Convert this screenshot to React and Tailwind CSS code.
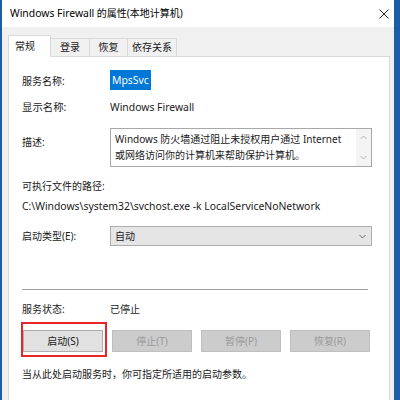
import React from "react";

const font = "font-['Noto_Sans','Noto_Sans_CJK_SC',sans-serif]";

const Row = ({ label, children, className = "" }) => (
  <div className={`flex items-center h-[20px] ${className}`}>
    <div className="w-[88px] shrink-0">{label}</div>
    <div className="flex-1">{children}</div>
  </div>
);

const Chevron = ({ up }) => (
  <svg width="7" height="5" viewBox="0 0 7 5" className="block">
    <path
      d={up ? "M0.5 4 L3.5 1 L6.5 4" : "M0.5 1 L3.5 4 L6.5 1"}
      fill="none"
      stroke="currentColor"
      strokeWidth="1"
    />
  </svg>
);

export default function App() {
  return (
    <div className={`w-[400px] h-[400px] overflow-hidden bg-[#1c5ea6] pl-[2px] pr-[6px] text-[10px] text-[#1a1a1a] ${font}`}>
      <div className="h-full bg-[#f0f0f0] flex flex-col">
        {/* Title bar */}
        <div className="h-[27px] bg-white flex items-center pl-[8px] pr-[5px] shrink-0">
          <span className="text-black">
            <span className="text-[10.4px]">Windows Firewall</span> 的属性(本地计算机)
          </span>
          <svg width="10" height="10" viewBox="0 0 10 10" className="ml-auto">
            <path d="M0.5 0.5 L9.5 9.5 M9.5 0.5 L0.5 9.5" stroke="#222" strokeWidth="1" />
          </svg>
        </div>

        {/* Tabs */}
        <div className="flex items-end pl-[6px] pt-[8px] shrink-0 relative z-10">
          <div className="h-[22px] w-[43px] bg-white border border-b-0 border-[#d9d9d9] flex items-center pl-[6px] -mb-px">
            常规
          </div>
          <div className="h-[18px] w-[39px] bg-[#f0f0f0] border border-l-0 border-b-0 border-[#d9d9d9] flex items-center justify-center">
            登录
          </div>
          <div className="h-[18px] w-[38px] bg-[#f0f0f0] border border-l-0 border-b-0 border-[#d9d9d9] flex items-center justify-center">
            恢复
          </div>
          <div className="h-[18px] w-[49px] bg-[#f0f0f0] border border-l-0 border-b-0 border-[#d9d9d9] flex items-center justify-center">
            依存关系
          </div>
        </div>

        {/* Panel */}
        <div className="flex-1 ml-[6px] mr-[4px] bg-white border border-[#d9d9d9] border-b-0 pl-[13px] pr-[17px] pt-[14px]">
          <Row label="服务名称:">
            <span className="bg-[#0078d7] text-white text-[10.4px] px-[2px] py-[3px]">MpsSvc</span>
          </Row>
          <Row label="显示名称:" className="mt-[7px] text-[10.4px]">
            Windows Firewall
          </Row>

          <div className="flex mt-[10px]">
            <div className="w-[88px] shrink-0 pt-[7px]">描述:</div>
            <div className="flex-1 h-[39px] border border-[#a8a8a8] flex">
              <div className="flex-1 pl-[4px] pt-[2px] leading-[16px]">
                Windows 防火墙通过阻止未授权用户通过 Internet
                <br />
                或网络访问你的计算机来帮助保护计算机。
              </div>
              <div className="w-[15px] bg-[#f4f4f4] flex flex-col items-center justify-between py-[6px] text-[#b5b5b5]">
                <Chevron up />
                <Chevron />
              </div>
            </div>
          </div>

          <div className="h-[20px] flex items-center mt-[9px]">可执行文件的路径:</div>
          <div className="h-[20px] flex items-center mt-px text-[10.4px]">
            C:\Windows\system32\svchost.exe -k LocalServiceNoNetwork
          </div>

          <Row label="启动类型(E):" className="mt-[9px]">
            <div className="h-[20px] border border-[#adadad] bg-[#e5e5e5] flex items-center pl-[4px] pr-[5px]">
              自动
              <span className="ml-auto text-[#666]">
                <Chevron />
              </span>
            </div>
          </Row>

          <div className="h-px bg-[#a0a0a0] mt-[43px] mr-[4px]" />

          <Row label="服务状态:" className="mt-[9px]">
            已停止
          </Row>

          <div className="flex gap-[9px] mt-[11px] pl-px">
            <div className="relative">
              <div className="h-[22px] w-[80px] border border-[#adadad] bg-[#e1e1e1] flex items-center justify-center">
                启动(S)
              </div>
              <div className="absolute -left-[2px] -right-[4px] -top-[8px] -bottom-[5px] border-2 border-[#e8262a]" />
            </div>
            <div className="h-[22px] w-[80px] border border-[#bfbfbf] bg-[#cccccc] text-[#9a9a9a] flex items-center justify-center">
              停止(T)
            </div>
            <div className="h-[22px] w-[80px] border border-[#bfbfbf] bg-[#cccccc] text-[#9a9a9a] flex items-center justify-center">
              暂停(P)
            </div>
            <div className="h-[22px] w-[80px] border border-[#bfbfbf] bg-[#cccccc] text-[#9a9a9a] flex items-center justify-center">
              恢复(R)
            </div>
          </div>

          <div className="h-[20px] flex items-center mt-[12px]">
            当从此处启动服务时，你可指定所适用的启动参数。
          </div>
        </div>
      </div>
    </div>
  );
}
